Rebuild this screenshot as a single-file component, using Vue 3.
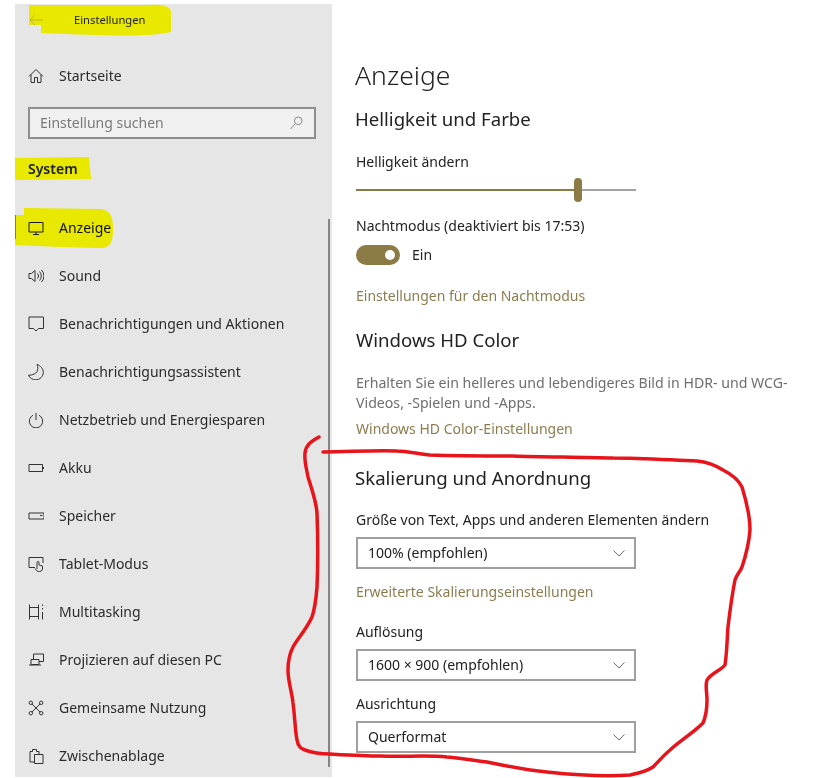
<script setup>
const nav = [
  { label: 'Anzeige', active: true, d: 'M1 2.500h14v9.500H1z M8 12v2 M5 14.500h6' },
  { label: 'Sound', d: 'M1 5.500h2.500L7 2.500v11L3.500 10.500H1z M9.500 5.500a3.500 3.500 0 0 1 0 5 M11.500 3.500a6.500 6.500 0 0 1 0 9 M13.500 2a8.500 8.500 0 0 1 0 12' },
  { label: 'Benachrichtigungen und Aktionen', d: 'M1 1h14.500v11.500h-5L8 15 5.500 12.500H1z' },
  { label: 'Benachrichtigungsassistent', d: 'M9 .5c2.200 5 .5 10.500-8.500 10.800C2 14.500 5 15.800 7.500 15.800c4.300 0 7.800-3.300 7.800-7.500 0-3.500-2.800-6.800-6.300-7.800z' },
  { label: 'Netzbetrieb und Energiesparen', d: 'M5 3.200a6.700 6.700 0 1 0 6 0 M8 1v7' },
  { label: 'Akku', d: 'M1 4.500h13.500v7H1z M15.500 7v2' },
  { label: 'Speicher', d: 'M1 5h15v6H1z M12 7.500h2.500' },
  { label: 'Tablet-Modus', d: 'M7 11.500H1v-10h14V7 M9 13V6.500a1 1 0 0 1 2 0V9l3.500 1v3a3 3 0 0 1-3 2.500C9.500 15.500 8 14.500 7 12.500' },
  { label: 'Multitasking', d: 'M1.500 .5v3 M10.500 .5v3 M1 3.500h10 M1 12.500h10 M1.500 3.500v9 M10.500 3.500v9 M1.500 12.500v3 M10.500 12.500v3 M14.500 .5v1.500 M14.500 4v1.500 M14.500 8v7.500' },
  { label: 'Projizieren auf diesen PC', d: 'M5.500 7V2h10v7.500H11 M3 7.500h8v5H3z M1 13h12' },
  { label: 'Gemeinsame Nutzung', d: 'M4 4l8 8 M12 4l-8 8 M4.500 2.800a1.700 1.700 0 1 1-3.400 0 1.700 1.700 0 0 1 3.400 0z M14.900 2.800a1.700 1.700 0 1 1-3.400 0 1.700 1.700 0 0 1 3.400 0z M4.500 13.200a1.700 1.700 0 1 1-3.400 0 1.700 1.700 0 0 1 3.400 0z M14.900 13.200a1.700 1.700 0 1 1-3.400 0 1.700 1.700 0 0 1 3.400 0z' },
  { label: 'Zwischenablage', d: 'M6.500 6.500h8.500v9H6.500z M6.500 14H2V3.500h2.500V1.500h4v2H11v3' },
]
const redPath = 'M319 437C312 441 306 444 305 453C304 462 307 470 308 477C312 490 316 500 317 513C318 540 318 565 317 587C316 600 315 608 312 617C306 630 298 638 293 647C289 655 288 662 288 670C288 682 292 692 293 703C295 718 295 730 297 740C298 746 301 749 305 750C313 753 322 754 330 754C348 755 365 756 380 756C405 757 428 755 447 757C460 758 472 760 487 762C506 766 525 770 547 772C575 775 604 777 630 775C640 773 647 771 653 767C659 761 664 755 670 750C681 740 693 733 703 723C706 716 707 708 707 700C707 692 705 686 707 680C711 673 720 671 725 665C727 652 727 640 728 627C730 610 732 595 735 580C737 574 740 572 742 567C746 555 749 543 750 530C750 515 746 500 742 487C738 479 731 474 723 470C715 465 707 462 697 461C670 460 641 458 613 458C580 457 546 457 513 456C485 456 457 456 430 455C418 454 408 451 397 451C372 450 348 452 323 452'
</script>

<template>
  <div class="page">
    <aside class="sidebar">
      <svg class="marks" width="317" height="773" viewBox="15 4 317 773">
        <path fill="#e8e800" d="M29 5H150C160 4 171 6 171 12L171 32C150 37 110 36 41 33L41 25L29 25z" />
        <path fill="#e8e800" d="M15 158L89 157L91 179L15 180z" />
        <path fill="#e8e800" d="M24 208L100 209C110 210 113 216 113 228C113 240 112 248 100 248L60 247L15 245V215H24z" />
      </svg>
      <div class="side-content">
        <div class="title-row">
          <svg class="back" width="14" height="12" viewBox="0 0 14 12"><path d="M6 1L1 6l5 5M1 6h13" /></svg>
          <span class="title">Einstellungen</span>
        </div>
        <div class="nav-row home">
          <svg class="ico" width="16" height="16" viewBox="0 0 16 16"><path d="M1 8.500L8 1.500l7 7M3 6.500v8h3.500v-5h3v5H13v-8" /></svg>
          <span>Startseite</span>
        </div>
        <div class="search">
          <span>Einstellung suchen</span>
          <svg class="ico search-ico" width="14" height="14" viewBox="0 0 14 14"><path d="M13 4.800a3.800 3.800 0 1 1-7.600 0 3.800 3.800 0 0 1 7.600 0zM6.500 7.500L1.500 13" /></svg>
        </div>
        <div class="system">System</div>
        <nav class="nav-list">
          <div v-for="item in nav" :key="item.label" class="nav-row" :class="{ active: item.active }">
            <svg class="ico" width="16" height="16" viewBox="0 0 16 16"><path :d="item.d" /></svg>
            <span>{{ item.label }}</span>
          </div>
        </nav>
      </div>
      <div class="scrollbar"></div>
      <div class="accent"></div>
    </aside>

    <main class="main">
      <h1>Anzeige</h1>
      <h2 class="m9">Helligkeit und Farbe</h2>
      <div class="label m19">Helligkeit ändern</div>
      <div class="slider m6">
        <div class="track-on"></div>
        <div class="thumb"></div>
        <div class="track-off"></div>
      </div>
      <div class="label m14">Nachtmodus (deaktiviert bis 17:53)</div>
      <div class="toggle-row m9">
        <div class="toggle"><div class="knob"></div></div>
        <span class="label">Ein</span>
      </div>
      <div class="link m21">Einstellungen für den Nachtmodus</div>
      <h2 class="m20 h-hd">Windows HD Color</h2>
      <p class="para">Erhalten Sie ein helleres und lebendigeres Bild in HDR- und WCG-<br />Videos, -Spielen und -Apps.</p>
      <div class="link m6">Windows HD Color-Einstellungen</div>
      <h2 class="m25">Skalierung und Anordnung</h2>
      <div class="label m18">Größe von Text, Apps und anderen Elementen ändern</div>
      <div class="select m7"><span>100% (empfohlen)</span><svg class="chev" width="12" height="7" viewBox="0 0 12 7"><path d="M.5.500L6 6l5.500-5.500" /></svg></div>
      <div class="link m13">Erweiterte Skalierungseinstellungen</div>
      <div class="label m20">Auflösung</div>
      <div class="select m7"><span>1600 × 900 (empfohlen)</span><svg class="chev" width="12" height="7" viewBox="0 0 12 7"><path d="M.5.500L6 6l5.500-5.500" /></svg></div>
      <div class="label m13">Ausrichtung</div>
      <div class="select m7"><span>Querformat</span><svg class="chev" width="12" height="7" viewBox="0 0 12 7"><path d="M.5.500L6 6l5.500-5.500" /></svg></div>
    </main>

    <svg class="scribble" width="825" height="778" viewBox="0 0 825 778">
      <path :d="redPath" />
    </svg>
  </div>
</template>

<style>
html, body { margin: 0; background: #fff; }
</style>

<style scoped>
.page {
  position: relative;
  display: flex;
  width: 825px;
  height: 778px;
  overflow: hidden;
  background: #fff;
  font-family: "Noto Sans", sans-serif;
  font-size: 14px;
  line-height: 20px;
  color: #1f1f1f;
  filter: blur(0.4px);
}
.sidebar {
  position: relative;
  flex: none;
  box-sizing: border-box;
  width: 317px;
  height: 773px;
  margin: 4px 0 0 15px;
  overflow: hidden;
  background: #e6e6e6;
}
.marks { position: absolute; left: 0; top: 0; }
.side-content { position: relative; }
.title-row { display: flex; align-items: center; height: 32px; padding-left: 14px; }
.back { fill: none; stroke: #b8b830; stroke-width: 1; }
.title { margin-left: 31px; font-size: 11.2px; color: #222; }
.nav-row {
  display: flex;
  align-items: center;
  gap: 15px;
  height: 48px;
  padding-left: 13px;
  color: #2b2b2b;
}
.home { margin-top: 16px; }
.ico { flex: none; fill: none; stroke: #333; stroke-width: 1; }
.search {
  display: flex;
  align-items: center;
  justify-content: space-between;
  box-sizing: border-box;
  width: 288px;
  height: 32px;
  margin: 7px 0 0 13px;
  padding: 0 11px 0 10px;
  border: 2px solid #8e8e8e;
  background: #f0f0f0;
  color: #7a7a7a;
}
.search-ico { stroke: #8a8a8a; }
.system { margin: 20px 0 0 13px; font-weight: 600; color: #1a1a1a; }
.nav-list { margin-top: 25px; }
.active { color: #111; }
.active .ico { stroke: #1a1a1a; }
.scrollbar {
  position: absolute;
  left: 313px;
  top: 215px;
  width: 2px;
  height: 548px;
  background: #858585;
}
.accent {
  position: absolute;
  left: 0;
  top: 211px;
  width: 1px;
  height: 24px;
  background: #8c7b45;
}

.main { flex: none; padding: 56px 0 0 24px; width: 460px; }
h1 { margin: 0 0 0 -1px; font-size: 26.5px; line-height: 38px; padding-bottom: 2px; font-weight: 300; color: #222; }
h2 { margin: 0 0 0 -1px; font-size: 18.6px; line-height: 28px; font-weight: 400; color: #222; }
h2.h-hd { margin-left: 0; }
.label { line-height: 20px; color: #222; white-space: nowrap; }
h2.m9 { margin-top: 9px; } h2.m20 { margin-top: 20px; } h2.m25 { margin-top: 25px; }
.m6 { margin-top: 6px; } .m7 { margin-top: 7px; } .m9 { margin-top: 9px; }
.m13 { margin-top: 13px; } .m14 { margin-top: 14px; } .m18 { margin-top: 18px; }
.m19 { margin-top: 19px; } .m20 { margin-top: 20px; } .m21 { margin-top: 21px; }
.slider { display: flex; align-items: center; width: 280px; height: 24px; }
.track-on { width: 218px; height: 2px; background: #8c7b45; }
.thumb { width: 8px; height: 24px; border-radius: 4px; background: #8c7b45; }
.track-off { flex: 1; height: 2px; background: #a3a3a3; }
.toggle-row { display: flex; align-items: center; gap: 12px; height: 20px; }
.toggle { display: flex; align-items: center; justify-content: flex-end; box-sizing: border-box; width: 44px; height: 20px; padding-right: 5px; border-radius: 10px; background: #8c7b45; }
.knob { width: 10px; height: 10px; border-radius: 50%; background: #fff; }
.link { line-height: 20px; color: #8c7c4e; white-space: nowrap; }
.para { margin: 19px 0 0; font-size: 14.15px; line-height: 20px; color: #6e6e6e; white-space: nowrap; }
.select {
  display: flex;
  align-items: center;
  justify-content: space-between;
  box-sizing: border-box;
  width: 280px;
  height: 32px;
  padding: 0 9px 0 10px;
  border: 2px solid #a0a0a0;
  color: #222;
}
.chev { fill: none; stroke: #707070; stroke-width: 1; }
.scribble { position: absolute; left: 0; top: 0; pointer-events: none; }
.scribble path { fill: none; stroke: #e8141c; stroke-width: 3.5; stroke-linecap: round; stroke-linejoin: round; }
</style>
